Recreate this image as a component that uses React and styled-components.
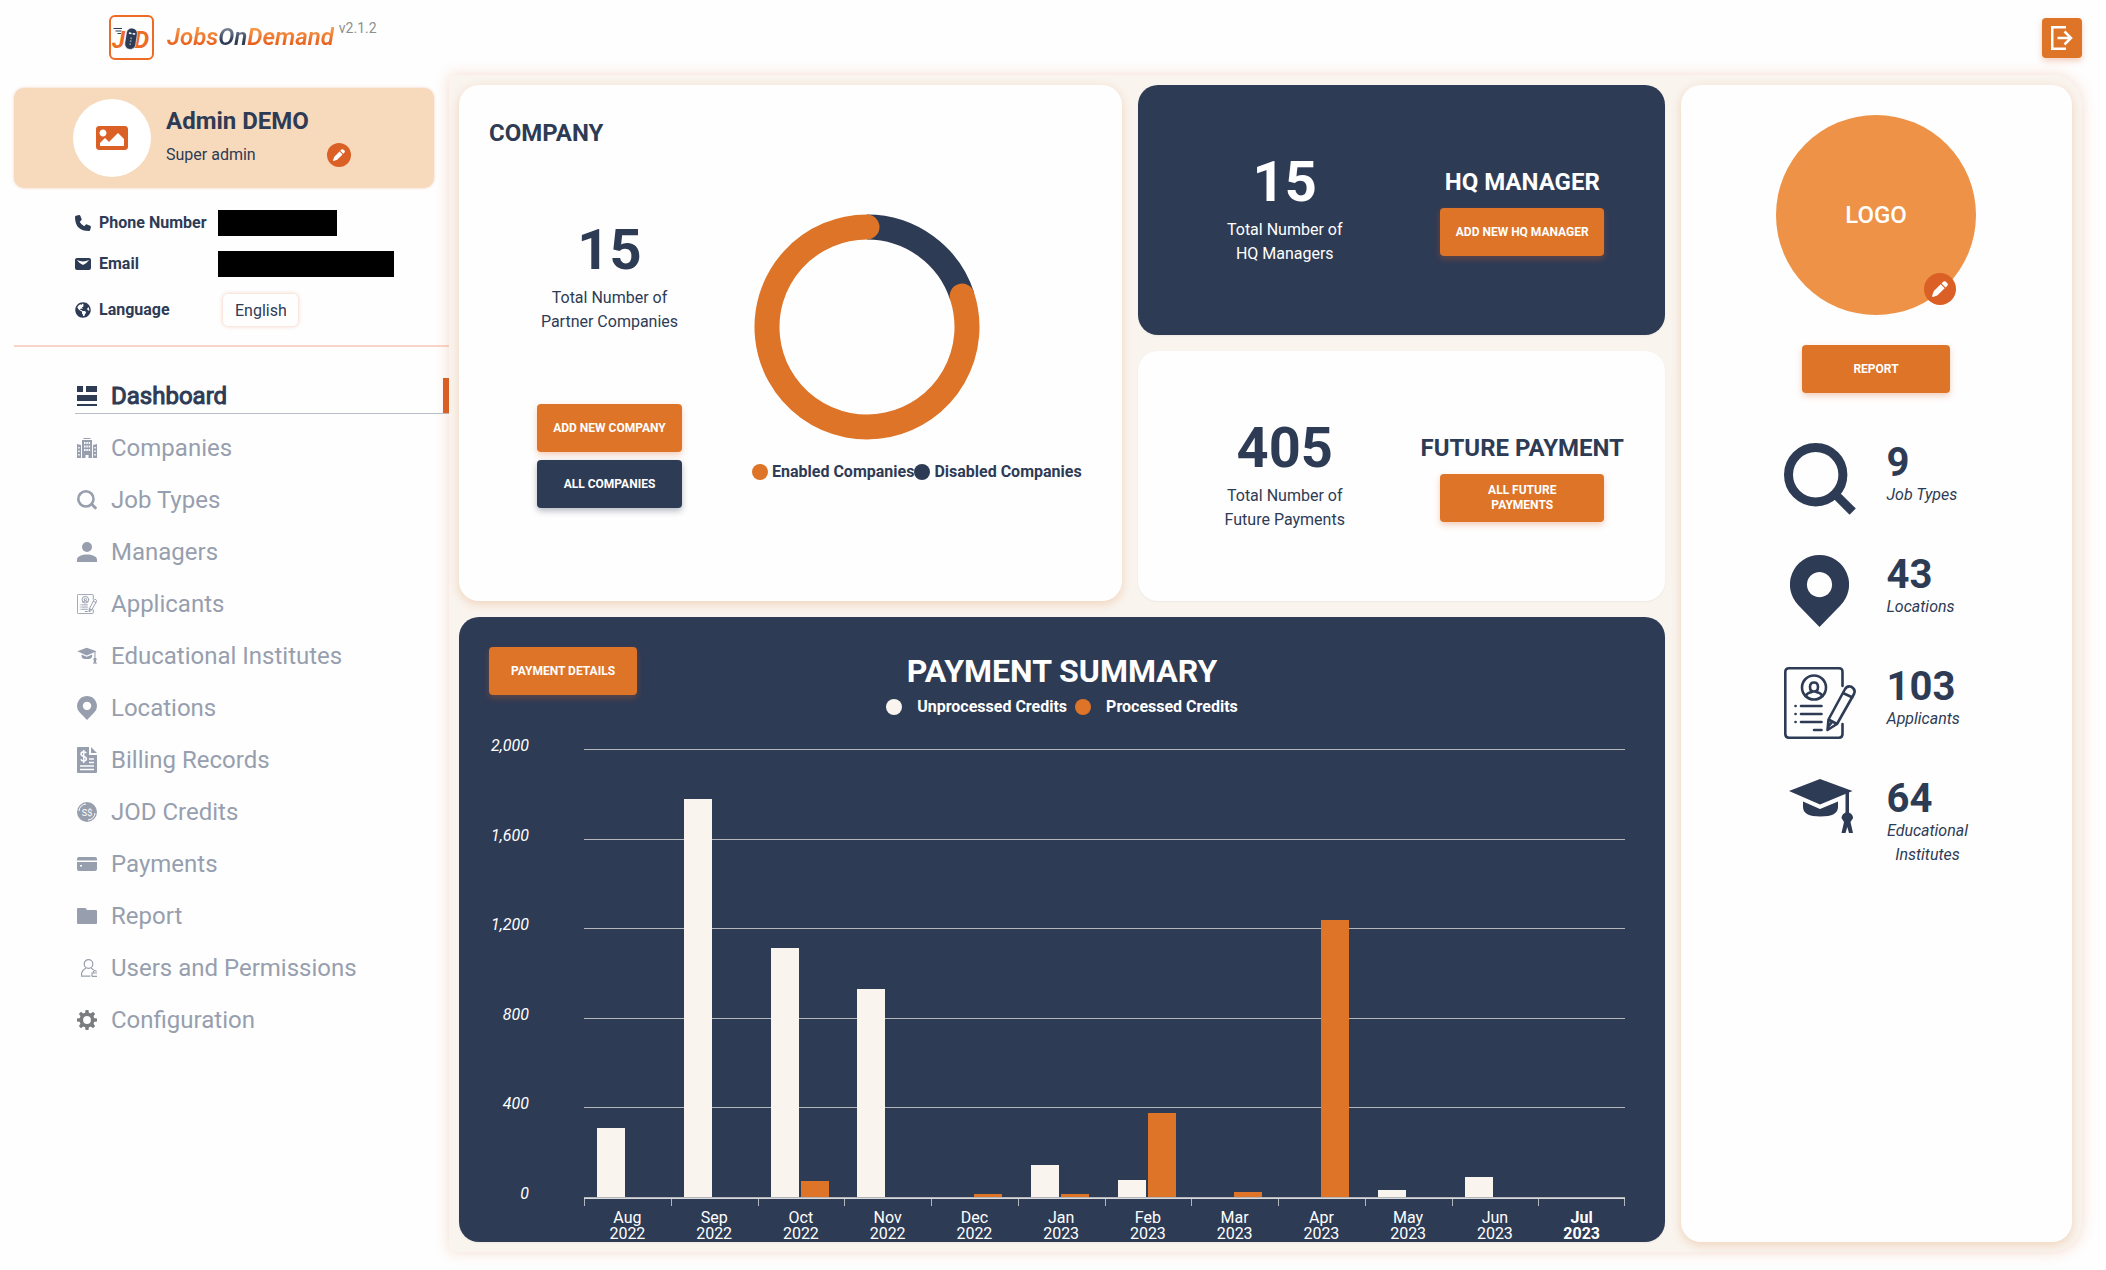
import React from "react";
import styled, { createGlobalStyle, css } from "styled-components";
import { FaImage, FaGlobeAmericas } from "react-icons/fa";

const c = {
  navy: "#2e3b55",
  orange: "#dd7428",
  deep: "#da6026",
  cream: "#f9f4ee",
  peach: "#f7d9bc",
  grey: "#979fae",
  page: "#fefefe",
};

const Global = createGlobalStyle`
  *, *::before, *::after { box-sizing: border-box; }
  body {
    margin: 0;
    background: ${c.page};
    color: ${c.navy};
    font-family: Roboto, "Liberation Sans", sans-serif;
    font-size: 16px;
    line-height: 24px;
  }
  h1, h2, h3, p, ul, dl, dd { margin: 0; padding: 0; }
  button, select { font-family: inherit; cursor: pointer; }
  svg { display: block; flex: none; }
`;

/* ---------- layout ---------- */

const Page = styled.div`
  display: flex;
  flex-direction: column;
  min-height: 100vh;
  padding-bottom: 20px;
`;

const Header = styled.header`
  display: flex;
  align-items: flex-start;
  justify-content: space-between;
  height: 75px;
  padding: 15px 24px 0 109px;
`;

const Body = styled.div`
  display: grid;
  grid-template-columns: 449px minmax(0, 1fr);
  flex: 1;
  padding-right: 24px;
`;

const Brand = styled.a`
  display: flex;
  align-items: flex-start;
  color: inherit;
  text-decoration: none;
`;

const Wordmark = styled.span`
  margin: 0 5px 0 13px;
  font-size: 24px;
  font-style: italic;
  font-weight: 600;
  line-height: 44px;
`;

const WordPart = styled.span`
  color: transparent;
  background: ${(p) =>
    p.$dark
      ? "linear-gradient(#7a8294 20%, #2e3b55 65%)"
      : "linear-gradient(#f59a4c 20%, #e9601c 75%)"};
  background-clip: text;
`;

const Version = styled.span`
  color: #8f8f8f;
  font-size: 14px;
  line-height: 26px;
`;

const LogoutButton = styled.button`
  display: grid;
  place-items: center;
  width: 40px;
  height: 40px;
  margin-top: 3px;
  padding: 0;
  border: 0;
  border-radius: 4px;
  background: ${c.orange};
  box-shadow: 0 3px 6px rgba(218, 96, 38, 0.3);
`;

/* ---------- sidebar ---------- */

const Sidebar = styled.aside`
  padding: 13px 0 0 14px;
`;

const Profile = styled.section`
  display: flex;
  align-items: center;
  gap: 15px;
  height: 100px;
  margin-right: 15px;
  padding: 0 83px 0 59px;
  border-radius: 10px;
  background: ${c.peach};
  box-shadow: 0 0 3px rgba(218, 96, 38, 0.3);
`;

const Avatar = styled.div`
  display: grid;
  place-items: center;
  flex: none;
  width: 78px;
  height: 78px;
  border-radius: 50%;
  background: #fff;
  color: ${c.deep};
`;

const ProfileText = styled.div`
  flex: 1;
  padding-top: 2px;
`;

const ProfileName = styled.h2`
  font-size: 24px;
  line-height: 32px;
`;

const ProfileRole = styled.div`
  display: flex;
  align-items: center;
  justify-content: space-between;
  height: 36px;
`;

const RoundEdit = styled.button`
  display: grid;
  place-items: center;
  width: ${(p) => p.$size}px;
  height: ${(p) => p.$size}px;
  padding: 0;
  border: 0;
  border-radius: 50%;
  background: ${c.deep};
`;

const Contact = styled.dl`
  display: grid;
  grid-template-columns: 143px auto;
  grid-template-rows: 40px 42px 50px;
  align-items: center;
  margin-top: 15px;
  padding: 0 0 10px 61px;
  border-bottom: 2px solid #f9d5c8;
`;

const ContactLabel = styled.dt`
  display: flex;
  align-items: center;
  gap: 8px;
  font-weight: 700;
  white-space: nowrap;
`;

const Redacted = styled.span`
  display: block;
  width: ${(p) => p.$w}px;
  height: 26px;
  background: #000;
`;

const LanguageSelect = styled.select`
  appearance: none;
  width: 75px;
  height: 32px;
  margin-left: 5px;
  padding: 0 12px;
  border: 0;
  border-radius: 5px;
  background: ${c.page};
  box-shadow: 0 0 4px rgba(218, 96, 38, 0.35);
  color: ${c.navy};
  font-size: 16px;
`;

const NavList = styled.ul`
  display: flex;
  flex-direction: column;
  gap: 16px;
  margin: 31px 0 0 61px;
  list-style: none;
`;

const NavLink = styled.a`
  display: flex;
  align-items: center;
  gap: 14px;
  height: 36px;
  padding-left: 2px;
  border-bottom: 1px solid transparent;
  color: ${c.grey};
  font-size: 24px;
  text-decoration: none;
  white-space: nowrap;
  ${(p) =>
    p.$active &&
    css`
      border-bottom-color: #b9bec8;
      color: ${c.navy};
      -webkit-text-stroke: 1px ${c.navy};
      &::after {
        content: "";
        align-self: stretch;
        width: 6px;
        margin-left: auto;
        background: ${c.deep};
      }
    `}
`;

const NavIcon = styled.span`
  display: flex;
  justify-content: flex-end;
  width: 20px;
  ${(p) => p.$dim && css`color: #7b7c7e;`}
`;

/* ---------- dashboard ---------- */

const Board = styled.main`
  display: grid;
  grid-template-columns: minmax(0, 663fr) minmax(0, 527fr) minmax(0, 391fr);
  grid-template-rows: 250px 250px auto;
  gap: 16px;
  padding: 10px;
  border-radius: 0 30px 30px 0;
  background: ${c.cream};
  box-shadow: 0 0 14px rgba(218, 96, 38, 0.22);
`;

const Card = styled.section`
  border-radius: 20px;
  background: ${(p) => (p.$dark ? c.navy : c.page)};
  color: ${(p) => (p.$dark ? "#fff" : c.navy)};
  box-shadow: ${(p) => (p.$glow ? "0 3px 10px rgba(221, 116, 40, 0.25)" : "0 1px 2px rgba(0, 0, 0, 0.05)")};
`;

const CompanyCard = styled(Card)`
  grid-row: span 2;
  display: grid;
  grid-template-columns: 241px minmax(0, 1fr);
  grid-template-rows: 36px auto;
  padding: 30px;
`;

const CardTitle = styled.h2`
  font-size: 24px;
  line-height: 36px;
  white-space: nowrap;
`;

const CompanyFigures = styled.div`
  grid-row: 2;
  display: flex;
  flex-direction: column;
  align-items: center;
  gap: 8px;
  padding-top: 66px;
`;

const Total = styled.div`
  text-align: center;
  margin-bottom: ${(p) => p.$after || 0}px;
`;

const TotalNumber = styled.strong`
  display: block;
  margin-bottom: 3px;
  font-size: 56px;
  line-height: 66px;
`;

const Button = styled.button`
  width: ${(p) => p.$w || 148}px;
  height: 48px;
  padding: 0 12px;
  border: 0;
  border-radius: 4px;
  background: ${(p) => (p.$dark ? c.navy : c.orange)};
  box-shadow: 0 3px 6px ${(p) => (p.$dark ? "rgba(46, 59, 85, 0.35)" : "rgba(218, 96, 38, 0.3)")};
  color: #fff;
  font-size: 12px;
  font-weight: 700;
  line-height: 15px;
  text-transform: uppercase;
`;

const CompanyChart = styled.div`
  grid-row: 2;
  padding: 63px 0 0 22px;
`;

const Ring = styled.svg`
  margin-left: 2px;
`;

const RingLegend = styled.div`
  display: flex;
  margin-top: 20px;
  font-weight: 700;
  white-space: nowrap;
`;

const LegendItem = styled.span`
  display: flex;
  align-items: center;
  gap: ${(p) => p.$gap}px;
  &::before {
    content: "";
    width: 16px;
    height: 16px;
    border-radius: 50%;
    background: ${(p) => p.$color};
  }
`;

const SplitCard = styled(Card)`
  display: grid;
  grid-template-columns: 1fr 1fr;
  padding: 64px 24px 0 28px;
`;

const SplitAction = styled.div`
  display: flex;
  flex-direction: column;
  align-items: center;
  gap: 8px;
  padding-top: 15px;
`;

const PaymentCard = styled(Card)`
  grid-column: 1 / span 2;
  display: flex;
  flex-direction: column;
  padding: 30px 40px 0 30px;
`;

const PaymentHead = styled.div`
  display: grid;
  grid-template-columns: 1fr auto 1fr;
  margin-right: -10px;
`;

const PaymentTitle = styled.h2`
  font-size: 32px;
  line-height: 48px;
`;

const PaymentLegend = styled.div`
  display: flex;
  justify-content: center;
  gap: 8px;
  margin-right: -10px;
  font-weight: 700;
`;

const Chart = styled.div`
  display: grid;
  grid-template-columns: 40px minmax(0, 1fr);
  column-gap: 55px;
  margin-top: 30px;
`;

const YAxis = styled.div`
  display: flex;
  flex-direction: column;
  justify-content: space-between;
  height: 472px;
  margin: -15px 0 -7px;
  font-style: italic;
  text-align: right;
`;

const Plot = styled.div`
  position: relative;
  height: 450px;
  border-bottom: 2px solid #d9d9db;
`;

const GridLines = styled.div`
  position: absolute;
  inset: 0 0 -1px;
  display: flex;
  flex-direction: column;
  justify-content: space-between;
  & > i {
    height: 1px;
    background: #b3b6bb;
  }
`;

const Bars = styled.div`
  position: absolute;
  inset: 0;
  display: grid;
  grid-template-columns: repeat(12, 1fr);
`;

const BarPair = styled.div`
  display: flex;
  align-items: flex-end;
  gap: 2px;
  padding-left: 15%;
  & > span {
    width: 28px;
    background: ${c.cream};
  }
  & > span + span {
    background: ${c.orange};
  }
`;

const Months = styled.div`
  grid-column: 2;
  display: grid;
  grid-template-columns: repeat(12, 1fr);
  background: linear-gradient(#b3b6bb, #b3b6bb) 100% 0 / 1px 7px no-repeat;
`;

const Month = styled.div`
  padding-top: 11px;
  background: linear-gradient(#b3b6bb, #b3b6bb) 0 0 / 1px 7px no-repeat;
  font-weight: ${(p) => (p.$current ? 700 : 400)};
  line-height: 16px;
  text-align: center;
  white-space: pre-line;
`;

const StatsCard = styled(Card)`
  grid-column: 3;
  grid-row: 1 / span 3;
  display: flex;
  flex-direction: column;
  align-items: center;
  padding: 30px 1px 0 0;
`;

const LogoCircle = styled.div`
  position: relative;
  display: grid;
  place-items: center;
  width: 200px;
  height: 200px;
  margin-bottom: 30px;
  border-radius: 50%;
  background: #ed9247;
  color: #fff;
  font-size: 24px;
  font-weight: 500;
  & > button {
    position: absolute;
    right: 20px;
    bottom: 10px;
  }
`;

const Stats = styled.div`
  display: flex;
  flex-direction: column;
  gap: 40px;
  margin-top: 50px;
`;

const Stat = styled.div`
  display: grid;
  grid-template-columns: 72px 82px;
  gap: 31px;
  height: 72px;
  justify-items: center;
`;

const StatText = styled.div`
  display: flex;
  flex-direction: column;
  align-items: flex-start;
  justify-self: start;
  font-style: italic;
  & > strong {
    font-size: 40px;
    font-style: normal;
    line-height: 40px;
  }
  & > span {
    text-align: center;
  }
`;

/* ---------- icons ---------- */

const Svg = ({ w, h, vx = 0, vy = 0, vw = w, vh = h, children, ...rest }) => (
  <svg width={w} height={h} viewBox={`${vx} ${vy} ${vw} ${vh}`} fill="currentColor" aria-hidden="true" {...rest}>
    {children}
  </svg>
);

const BrandMark = () => (
  <Svg w={45} h={45}>
    <rect x="1" y="1" width="43" height="43" rx="5" fill="none" stroke="#ee6b24" strokeWidth="2" />
    <path d="M4.500 13.500H13M6.500 16H12.500M8.500 18.500H12" stroke={c.navy} strokeWidth="1" />
    <g fontFamily="Roboto, sans-serif" fontSize="24" fontWeight="700" fontStyle="italic" fill="#ee6b24">
      <text x="3" y="33">J</text>
      <text x="25" y="33">D</text>
    </g>
    <g transform="rotate(9 22 24)">
      <rect x="16.500" y="13" width="11" height="21.500" rx="5.500" fill={c.navy} stroke={c.page} strokeWidth=".6" />
      <path d="M19 18.500h2.600M22.800 18.500h2.600" stroke="#fff" strokeWidth="1.500" />
      <path d="M22 22.500v8" stroke="#9aa2b2" strokeWidth="1.600" strokeDasharray="1.500 1.500" />
    </g>
  </Svg>
);

const LogoutIcon = () => (
  <Svg w={22} h={24} fill="none" stroke="#fff" strokeWidth="2.500">
    <path d="M15 1.250H1.250V22.750H15M6.500 12H20M13.500 5.500L20 12L13.500 18.500" />
  </Svg>
);

const PencilIcon = ({ size }) => (
  <Svg w={size} h={size} vw={16} vh={16} fill="#fff">
    <path d="M8.700 3.300L12.700 7.300L6.300 13.600Q5.600 14.300 4.600 14.700L.9 15.900Q0 16 .1 15.100L1.300 11.400Q1.700 10.300 2.400 9.600Z" />
    <path d="M9.600 2.400L11.200.8Q12.900-.6 14.600 1.400Q16.900 3.400 15.100 4.900L13.600 6.400Z" />
  </Svg>
);

const PhoneIcon = () => (
  <Svg w={16} h={16}>
    <path d="M1 .8L4 .1Q5 0 5.400.9L6.600 4Q6.900 4.900 6.100 5.600L4.700 6.800Q6.200 9.800 9.200 11.300L10.400 9.900Q11.100 9.100 12 9.500L15.200 10.700Q16 11.100 15.900 12L15.200 15Q15 16 14 16Q0 16 0 2Q0 1 1 .8Z" />
  </Svg>
);

const MailIcon = () => (
  <Svg w={16} h={12}>
    <path d="M2 0H14Q16 0 16 2V10Q16 12 14 12H2Q0 12 0 10V2Q0 0 2 0ZM1.800 2Q4.500 5.500 8 7Q11.500 5.500 14.200 2Q11 3.400 8 3.400T1.800 2Z" fillRule="evenodd" />
  </Svg>
);

const DashboardIcon = () => (
  <Svg w={20} h={20}>
    <path d="M0 0h6v6H0zM9 0h11v6H9zM0 9h20v6H0zM0 18h20v2H0z" />
  </Svg>
);

const CompaniesIcon = () => (
  <Svg w={20} h={20}>
    <path
      fillRule="evenodd"
      d="M6.500 0h7v1h-7zM5 2h10v18h-3.500v-3h-3v3H5zM7 4v2h1.500V4zM9.300 4v2h1.500V4zM11.600 4v2h1.500V4zM7 7.500v2h1.500v-2zM9.300 7.500v2h1.500v-2zM11.600 7.500v2h1.500v-2zM7 11v2h1.500v-2zM9.300 11v2h1.500v-2zM11.600 11v2h1.500v-2zM0 6l4 1v13H0zM1.200 9v1.500h1.500V9zM1.200 12.500V14h1.500v-1.500zM1.200 16v1.500h1.500V16zM20 6l-4 1v13h4zM17.300 9v1.500h1.500V9zM17.300 12.500V14h1.500v-1.500zM17.300 16v1.500h1.500V16z"
    />
  </Svg>
);

const SearchIcon = () => (
  <Svg w={20} h={20} fill="none" stroke="currentColor" strokeWidth="2.600">
    <circle cx="8.900" cy="8.900" r="7.600" />
    <path d="M14 13.500L19.200 18.700" strokeWidth="2.800" />
  </Svg>
);

const BigSearchIcon = () => (
  <Svg w={72} h={72} fill="none" stroke="currentColor">
    <circle cx="31.700" cy="31.700" r="27.200" strokeWidth="9" />
    <path d="M50 50L68.700 68.700" strokeWidth="8.800" />
  </Svg>
);

const ManagerIcon = () => (
  <Svg w={20} h={20}>
    <circle cx="10" cy="5" r="5" />
    <path d="M0 20V17.500C0 14 5.500 12.500 10 12.500S20 14 20 17.500V20Z" />
  </Svg>
);

const ApplicantIcon = ({ size, stroke = 2.6 }) => (
  <Svg w={size} h={size} vw={72} vh={72} fill="none" stroke="currentColor" strokeWidth={stroke} strokeLinecap="round" strokeLinejoin="round">
    <path d="M58.500 19V5Q58.500 1.300 55 1.300H5Q1.300 1.300 1.300 5V67Q1.300 70.700 5 70.700H55Q58.500 70.700 58.500 67V57" />
    <circle cx="30" cy="20.500" r="12" />
    <path d="M26 20Q26 15.500 30 15.500T34 20Q34 24.500 30 24.500T26 20M21.500 29Q23.500 25.500 28 25M38.500 29Q36.500 25.500 32 25" />
    <path d="M17 39H37.500M17 47H37.500M17 55H37.500M30 63H37.500M11.500 39h.1M11.500 47h.1M11.500 55h.1" />
    <path d="M43.500 63L44.500 52.500L60.500 23Q63 18 67.500 19.800Q72 22.500 70 27L53 57ZM59 26L68.500 30.500M44.500 52.500L53 57M44 60L48 55" />
  </Svg>
);

const CapIcon = (props) => (
  <Svg {...props}>
    <path d="M5 12L36 0L68.500 12L36 25.500Z" />
    <path d="M19 22.500L36 30L54 22.500V28Q54 37.500 36.500 37.500T19 28Z" />
    <path d="M61.500 12H65V35H61.500ZM57.500 39a5.800 5.800 0 1 1 11.600 0L66.500 43L69 54H65L63.300 48L61.500 54H57.500L60 43Z" />
  </Svg>
);

const PinIcon = ({ w, h }) => (
  <Svg w={w} h={h} vw={59} vh={72}>
    <path fillRule="evenodd" d="M29.500 0A29.500 29.500 0 0 1 50.400 50.400L29.500 72L8.600 50.400A29.500 29.500 0 0 1 29.500 0ZM29.500 17a12.600 12.600 0 1 0 .01 0Z" />
  </Svg>
);

const BillingIcon = () => (
  <Svg w={20} h={26}>
    <path d="M1 0H12V8H20V25Q20 26 19 26H1Q0 26 0 25V1Q0 0 1 0ZM14 0L20 6H14Z" />
    <path d="M9.300 6Q8.500 4.700 6.700 4.700Q4 4.800 4 7Q4 8.700 6.700 9.400T9.400 11.800Q9.400 13.800 6.700 13.900Q4.600 13.900 3.800 12.300M6.700 3V16" fill="none" stroke={c.page} strokeWidth="1.500" />
    <path d="M12 12h5M12 15.500h5M3 19h14M3 22.500h14" stroke={c.page} strokeWidth="1.500" />
  </Svg>
);

const CreditsIcon = () => (
  <Svg w={20} h={20}>
    <circle cx="10" cy="10" r="10" />
    <path d="M2 9A8 8 0 0 1 9 2M18 11A8 8 0 0 1 11 18" fill="none" stroke={c.page} strokeWidth="1" />
    <text x="10" y="13.500" textAnchor="middle" fontSize="9" fontFamily="Roboto, sans-serif" fill={c.page}>S$</text>
  </Svg>
);

const PaymentsIcon = () => (
  <Svg w={20} h={14}>
    <path fillRule="evenodd" d="M2 0H18Q20 0 20 2V3.500H0V2Q0 0 2 0ZM0 5H20V12Q20 14 18 14H2Q0 14 0 12ZM3 8v1.500h2V8z" />
  </Svg>
);

const FolderIcon = () => (
  <Svg w={20} h={16}>
    <path d="M1 0H8.500L10 2H19Q20 2 20 3V15Q20 16 19 16H1Q0 16 0 15V1Q0 0 1 0Z" />
  </Svg>
);

const UsersIcon = () => (
  <Svg w={16} h={18} fill="none" stroke="currentColor" strokeWidth="1.200">
    <circle cx="7.500" cy="5" r="4.300" />
    <path d="M5 9.200Q.5 11 .5 16V17.200H9.500M10 9.200Q12 10 12.500 11M11 17.300V14H16M12.500 14V12.500Q13.800 10.500 15.500 12.500M11 17.300H16" />
  </Svg>
);

const GearIcon = () => (
  <Svg w={20} h={20}>
    {[0, 45, 90, 135].map((a) => (
      <path key={a} d="M8.500 0h3l.5 4H8zM8 16h4l-.5 4h-3z" transform={`rotate(${a} 10 10)`} />
    ))}
    <circle cx="10" cy="10" r="5.700" fill="none" stroke="currentColor" strokeWidth="3.600" />
  </Svg>
);

/* ---------- data ---------- */

const navItems = [
  ["Dashboard", <DashboardIcon />],
  ["Companies", <CompaniesIcon />],
  ["Job Types", <SearchIcon />],
  ["Managers", <ManagerIcon />],
  ["Applicants", <ApplicantIcon size={20} stroke={3.6} />],
  ["Educational Institutes", <CapIcon w={20} h={18} vx={4} vy={-1} vw={66} vh={57} />],
  ["Locations", <PinIcon w={20} h={24} />],
  ["Billing Records", <BillingIcon />],
  ["JOD Credits", <CreditsIcon />],
  ["Payments", <PaymentsIcon />],
  ["Report", <FolderIcon />],
  ["Users and Permissions", <UsersIcon />],
  ["Configuration", <GearIcon />],
];

const months = [
  ["Aug", 2022, 310, 0],
  ["Sep", 2022, 1779, 0],
  ["Oct", 2022, 1110, 73],
  ["Nov", 2022, 927, 0],
  ["Dec", 2022, 0, 12],
  ["Jan", 2023, 145, 12],
  ["Feb", 2023, 75, 377],
  ["Mar", 2023, 0, 24],
  ["Apr", 2023, 0, 1237],
  ["May", 2023, 32, 0],
  ["Jun", 2023, 88, 0],
  ["Jul", 2023, 0, 0],
];

const yTicks = ["2,000", "1,600", "1,200", "800", "400", "0"];

const stats = [
  [9, "Job Types", <BigSearchIcon />],
  [43, "Locations", <PinIcon w={59} h={72} />],
  [103, "Applicants", <ApplicantIcon size={72} />],
  [64, "Educational Institutes", <CapIcon w={72} h={72} />],
];

const CountBlock = ({ value, line, after }) => (
  <Total $after={after}>
    <TotalNumber>{value}</TotalNumber>
    Total Number of
    <br />
    {line}
  </Total>
);

export default function App() {
  return (
    <Page>
      <Global />
      <Header>
        <Brand href="#home">
          <BrandMark />
          <Wordmark>
            <WordPart>Jobs</WordPart>
            <WordPart $dark>On</WordPart>
            <WordPart>Demand</WordPart>
          </Wordmark>
          <Version>v2.1.2</Version>
        </Brand>
        <LogoutButton aria-label="Log out">
          <LogoutIcon />
        </LogoutButton>
      </Header>

      <Body>
        <Sidebar>
          <Profile>
            <Avatar>
              <FaImage size={32} />
            </Avatar>
            <ProfileText>
              <ProfileName>Admin DEMO</ProfileName>
              <ProfileRole>
                Super admin
                <RoundEdit $size={24} aria-label="Edit profile">
                  <PencilIcon size={12} />
                </RoundEdit>
              </ProfileRole>
            </ProfileText>
          </Profile>

          <Contact>
            <ContactLabel>
              <PhoneIcon />
              Phone Number
            </ContactLabel>
            <dd>
              <Redacted $w={119} />
            </dd>
            <ContactLabel>
              <MailIcon />
              Email
            </ContactLabel>
            <dd>
              <Redacted $w={176} />
            </dd>
            <ContactLabel>
              <FaGlobeAmericas size={16} />
              <label htmlFor="language">Language</label>
            </ContactLabel>
            <dd>
              <LanguageSelect id="language" defaultValue="English">
                <option>English</option>
              </LanguageSelect>
            </dd>
          </Contact>

          <nav>
            <NavList>
              {navItems.map(([label, icon], i) => (
                <li key={label}>
                  <NavLink href={`#${label}`} $active={i === 0}>
                    <NavIcon $dim={label === "Configuration"}>{icon}</NavIcon>
                    {label}
                  </NavLink>
                </li>
              ))}
            </NavList>
          </nav>
        </Sidebar>

        <Board>
          <CompanyCard $glow>
            <CardTitle>COMPANY</CardTitle>
            <CompanyFigures>
              <CountBlock value={15} line="Partner Companies" after={62} />
              <Button $w={145}>Add new company</Button>
              <Button $w={145} $dark>All companies</Button>
            </CompanyFigures>
            <CompanyChart>
              <Ring width="226" height="226" viewBox="-113 -113 226 226" fill="none" strokeWidth="25" role="img" aria-label="Enabled and disabled companies">
                <path d="M0 -100A100 100 0 0 1 95.100 -30.900" stroke={c.navy} />
                <path d="M95.100 -30.900A100 100 0 1 1 0 -100" stroke={c.orange} strokeLinecap="round" />
              </Ring>
              <RingLegend>
                <LegendItem $color={c.orange} $gap={4}>Enabled Companies</LegendItem>
                <LegendItem $color={c.navy} $gap={4}>Disabled Companies</LegendItem>
              </RingLegend>
            </CompanyChart>
          </CompanyCard>

          <SplitCard $dark>
            <CountBlock value={15} line="HQ Managers" />
            <SplitAction>
              <CardTitle>HQ MANAGER</CardTitle>
              <Button $w={164}>Add new HQ manager</Button>
            </SplitAction>
          </SplitCard>

          <SplitCard>
            <CountBlock value={405} line="Future Payments" />
            <SplitAction>
              <CardTitle>FUTURE PAYMENT</CardTitle>
              <Button $w={164}>
                All future
                <br />
                payments
              </Button>
            </SplitAction>
          </SplitCard>

          <PaymentCard $dark>
            <PaymentHead>
              <Button>Payment details</Button>
              <PaymentTitle>PAYMENT SUMMARY</PaymentTitle>
            </PaymentHead>
            <PaymentLegend>
              <LegendItem $color={c.cream} $gap={15}>Unprocessed Credits</LegendItem>
              <LegendItem $color={c.orange} $gap={15}>Processed Credits</LegendItem>
            </PaymentLegend>
            <Chart>
              <YAxis>
                {yTicks.map((t) => (
                  <span key={t}>{t}</span>
                ))}
              </YAxis>
              <Plot>
                <GridLines>
                  {yTicks.map((t) => (
                    <i key={t} />
                  ))}
                </GridLines>
                <Bars>
                  {months.map(([m, , a, b]) => (
                    <BarPair key={m}>
                      <span style={{ height: `${a / 20}%` }} />
                      <span style={{ height: `${b / 20}%` }} />
                    </BarPair>
                  ))}
                </Bars>
              </Plot>
              <Months>
                {months.map(([m, y]) => (
                  <Month key={m} $current={m === "Jul"}>{`${m}\n${y}`}</Month>
                ))}
              </Months>
            </Chart>
          </PaymentCard>

          <StatsCard $glow>
            <LogoCircle>
              LOGO
              <RoundEdit $size={32} aria-label="Edit logo">
                <PencilIcon size={16} />
              </RoundEdit>
            </LogoCircle>
            <Button>Report</Button>
            <Stats>
              {stats.map(([n, label, icon]) => (
                <Stat key={label}>
                  {icon}
                  <StatText>
                    <strong>{n}</strong>
                    <span>{label}</span>
                  </StatText>
                </Stat>
              ))}
            </Stats>
          </StatsCard>
        </Board>
      </Body>
    </Page>
  );
}
